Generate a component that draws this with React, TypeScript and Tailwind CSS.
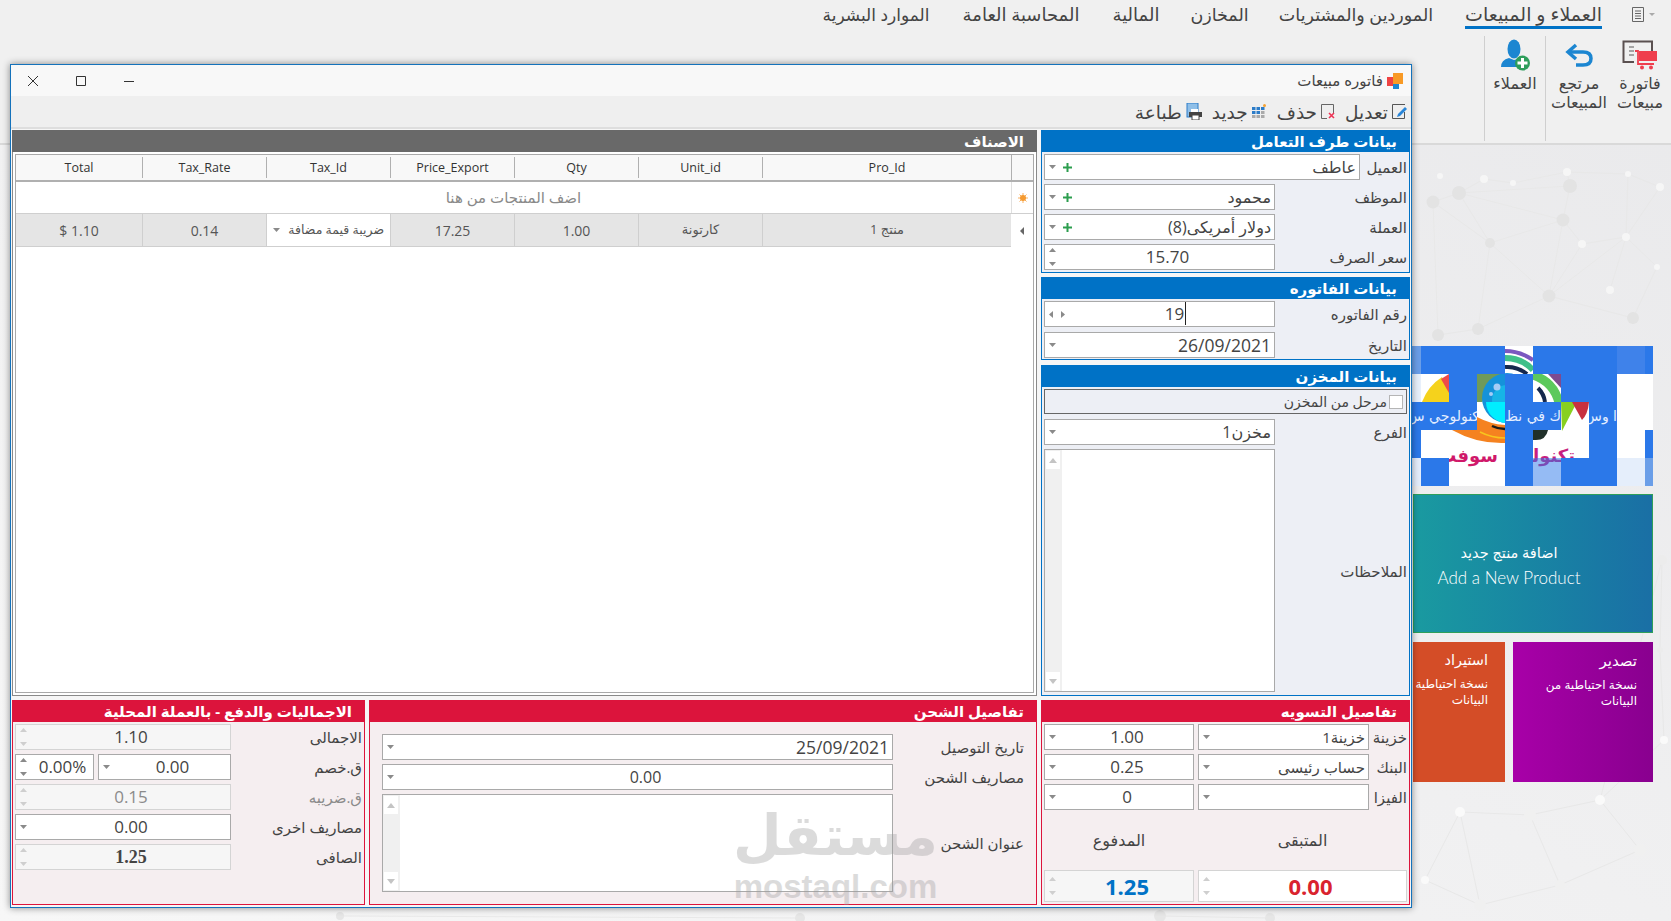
import type { ReactNode } from "react";
import clsx from "clsx";

const nodes: [number, number, number, string][] = [
  [1459, 193, 7, "#e3e3e3"], [1433, 202, 6.5, "#e3e3e3"], [1490, 243, 5, "#e3e3e3"], [1563, 220, 6.5, "#e3e3e3"],
  [1570, 186, 7, "#e3e3e3"], [1549, 296, 6.5, "#e3e3e3"], [1478, 329, 6, "#e3e3e3"], [1438, 335, 6, "#e3e3e3"],
  [1633, 318, 6, "#e3e3e3"], [1567, 172, 4, "#f6f6f6"], [1628, 174, 3, "#f6f6f6"], [1660, 187, 4, "#f6f6f6"],
  [1626, 237, 4, "#f6f6f6"], [1582, 244, 4, "#f6f6f6"], [1657, 267, 3, "#f6f6f6"], [1610, 290, 4, "#f6f6f6"],
  [1484, 179, 4, "#f6f6f6"], [1513, 183, 3, "#f6f6f6"], [1440, 176, 3, "#f6f6f6"],
  [1662, 560, 5, "#ececec"], [1664, 740, 4, "#fafafa"], [1660, 650, 3, "#ececec"], [1600, 800, 5, "#fafafa"],
  [1530, 815, 6, "#f0f0f0"], [1460, 812, 5, "#fafafa"], [1640, 850, 6, "#f0f0f0"], [1560, 885, 5, "#f0f0f0"],
  [1480, 905, 6, "#f0f0f0"], [1425, 880, 4, "#fafafa"], [1270, 918, 5, "#e6e6e6"], [800, 918, 5, "#e6e6e6"],
  [340, 916, 4, "#e6e6e6"], [1160, 916, 6, "#e6e6e6"],
];

const edges: [number, number][] = [
  [0, 1], [0, 2], [1, 2], [0, 3], [2, 3], [2, 5], [2, 6], [3, 5], [3, 13], [4, 3], [4, 9], [9, 10], [10, 11], [10, 12],
  [12, 13], [12, 5], [12, 14], [12, 15], [13, 5], [5, 6], [5, 8], [6, 7], [8, 14], [11, 12], [0, 16], [16, 17], [17, 9],
  [0, 4], [1, 7], [19, 21], [21, 20], [20, 22], [22, 23], [23, 24], [22, 25], [23, 26], [24, 27], [26, 27], [25, 26],
  [27, 28], [24, 28], [19, 22], [29, 32], [30, 31],
];

const menu = [
  { label: "العملاء و المبيعات", width: "w-[137px] text-[19px]", active: true },
  { label: "الموردين والمشتريات", width: "w-[152px] text-[17.5px]" },
  { label: "المخازن", width: "w-[55px] text-[17.5px]" },
  { label: "المالية", width: "w-[46px] text-[18px]" },
  { label: "المحاسبة العامة", width: "w-[118px] text-[18px]" },
  { label: "الموارد البشرية", width: "w-[106px] text-[17px]" },
];

const columns = ["Pro_Id", "Unit_id", "Qty", "Price_Export", "Tax_Id", "Tax_Rate", "Total"];

const Backdrop = () => (
  <svg className="absolute inset-0" width="1671" height="921" viewBox="0 0 1671 921">
    {edges.map(([a, b]) => (
      <line key={`${a}-${b}`} x1={nodes[a][0]} y1={nodes[a][1]} x2={nodes[b][0]} y2={nodes[b][1]} stroke="#e8e8e8" strokeWidth="1" />
    ))}
    {nodes.map(([x, y, r, fill]) => (
      <circle key={`${x}-${y}`} cx={x} cy={y} r={r} fill={fill} />
    ))}
  </svg>
);

const Down = () => (
  <svg width="7" height="4" viewBox="0 0 7 4"><path d="M0 0h7L3.500 4z" fill="#8a8a8a" /></svg>
);

const Spin = ({ faint }: { faint?: boolean }) => (
  <svg width="7" height="18" viewBox="0 0 7 18">
    <path d="M0 4h7L3.500 0z" fill={faint ? "#cfcfcf" : "#8a8a8a"} />
    <path d="M0 14h7L3.500 18z" fill={faint ? "#cfcfcf" : "#8a8a8a"} />
  </svg>
);

const Plus = () => (
  <svg width="9" height="9" viewBox="0 0 9 9"><path d="M3.500 0h2v3.500H9v2H5.500V9h-2V5.500H0v-2h3.500z" fill="#2c9e4f" /></svg>
);

const Field = ({
  children,
  kind = "combo",
  plus,
  right,
  off,
  className,
}: {
  children?: ReactNode;
  kind?: "combo" | "spin" | "nav";
  plus?: boolean;
  right?: boolean;
  off?: boolean;
  className?: string;
}) => (
  <div
    className={clsx(
      "flex h-[26px] shrink-0 items-center border",
      off ? "border-[#d4d4d4] bg-[#f6f6f6]" : "border-[#a9a9a9] bg-white",
      className,
    )}
  >
    <div
      className={clsx(
        "min-w-0 flex-1 whitespace-nowrap",
        right ? "pr-[3px] text-right" : "text-center",
      )}
    >
      {children}
    </div>
    <div dir="ltr" className={clsx("flex shrink-0 items-center pl-[4px]", kind === "nav" ? "w-[32px] gap-[8px]" : plus ? "w-[28px] gap-[7px]" : "w-[16px]")}>
      {kind === "combo" && <Down />}
      {kind === "spin" && <Spin faint={off} />}
      {kind === "nav" && (
        <>
          <svg width="4" height="7" viewBox="0 0 4 7"><path d="M4 0v7L0 3.500z" fill="#8a8a8a" /></svg>
          <svg width="4" height="7" viewBox="0 0 4 7"><path d="M0 0v7l4-3.500z" fill="#8a8a8a" /></svg>
        </>
      )}
      {plus && <Plus />}
    </div>
  </div>
);

const Memo = ({ className }: { className?: string }) => (
  <div dir="ltr" className={clsx("flex shrink-0 border border-[#a9a9a9] bg-white", className)}>
    <div className="flex w-[17px] flex-col justify-between bg-[#f0f0f0] p-[1px]">
      <div className="flex h-[18px] w-[14px] items-center justify-center bg-white">
        <svg width="8" height="5" viewBox="0 0 8 5"><path d="M0 5h8L4 0z" fill="#c4c4c4" /></svg>
      </div>
      <div className="flex h-[18px] w-[14px] items-center justify-center bg-white">
        <svg width="8" height="5" viewBox="0 0 8 5"><path d="M0 0h8L4 5z" fill="#c4c4c4" /></svg>
      </div>
    </div>
  </div>
);

const Panel = ({
  title,
  tone,
  className,
  children,
}: {
  title: string;
  tone: "blue" | "red" | "grey";
  className?: string;
  children: ReactNode;
}) => (
  <div
    className={clsx(
      "flex flex-col border",
      tone === "blue" && "border-[#0072c6] bg-[#edeff5]",
      tone === "red" && "border-[#dc143c] bg-[#f5eef0]",
      tone === "grey" && "border-[#8a8a8a] bg-white",
      className,
    )}
  >
    <div
      className={clsx(
        "-mx-[1px] -mt-[1px] flex h-[22px] shrink-0 items-center pr-[13px] text-[15px] font-bold text-white",
        tone === "blue" && "bg-[#0072c6]",
        tone === "red" && "bg-[#dc143c]",
        tone === "grey" && "bg-[#696969]",
      )}
    >
      {title}
    </div>
    {children}
  </div>
);

const Row = ({ label, children, muted, className }: { label: string; children: ReactNode; muted?: boolean; className?: string }) => (
  <div className={clsx("flex items-center", className)}>
    <div className={clsx("flex-1 whitespace-nowrap pt-[1px] text-[15px]", muted ? "text-[#8b8b8b]" : "text-[#444]")}>{label}</div>
    {children}
  </div>
);

const RibbonButton = ({ icon, lines, className }: { icon: ReactNode; lines: string[]; className?: string }) => (
  <div className={clsx("flex shrink-0 flex-col items-center", className)}>
    <div className="flex h-[38px] items-center justify-center">{icon}</div>
    {lines.map((line) => (
      <div key={line} className="h-[19px] whitespace-nowrap text-center text-[16px] leading-[19px] text-[#444]">{line}</div>
    ))}
  </div>
);

const ToolButton = ({ icon, label }: { icon: ReactNode; label: string }) => (
  <div className="flex items-center gap-[4px]">
    {icon}
    <span className="text-[18.5px] leading-[26px] text-[#444]">{label}</span>
  </div>
);

const Mosaic = () => (
  <svg width="241" height="140" viewBox="0 0 241 140" className="shrink-0">
    <defs>
      <clipPath id="t0"><rect x="0" y="56" width="65" height="28" /></clipPath>
      <clipPath id="t1"><rect x="93" y="56" width="56" height="28" /></clipPath>
      <clipPath id="t2"><rect x="177" y="56" width="28" height="28" /></clipPath>
      <clipPath id="p0"><rect x="37" y="100" width="56" height="40" /></clipPath>
      <clipPath id="p1"><rect x="121" y="100" width="56" height="40" /></clipPath>
    </defs>
    <rect width="241" height="140" fill="#fff" />
    {/* logo pieces */}
    <path d="M10 56Q16 40 30 31L37 46V56z" fill="#f5d21c" />
    <path d="M29 33L37 28V47z" fill="#ee4a4a" />
    <rect x="65" y="28" width="28" height="28" fill="#9fc8ef" />
    <path d="M65 28H93L70 56H65z" fill="#6f9a5a" />
    <circle cx="95" cy="52" r="25" fill="#1592da" />
    <circle cx="95" cy="54" r="15" fill="#17b4e6" />
    <circle cx="85" cy="41" r="3.500" fill="#a5cdf6" />
    <circle cx="79" cy="48" r="2" fill="#a5cdf6" />
    <path d="M74 56A21 21 0 0 0 95 77V56z" fill="#00eeff" />
    <path d="M65 71Q78 78 93 79V84H65z" fill="#f58220" />
    <path d="M40 84Q65 98 93 97V84z" fill="#f58220" />
    <path d="M68 86Q80 92 93 92" fill="none" stroke="#f7c51e" strokeWidth="1.500" />
    <path d="M80 80Q86 83 93 83" fill="none" stroke="#1b1b1b" strokeWidth="2.500" />
    <path d="M93 5Q108 5 121 14" fill="none" stroke="#7b57c0" strokeWidth="4" />
    <path d="M93 12Q110 12 121 24" fill="none" stroke="#3fc08a" strokeWidth="6" />
    <path d="M93 21Q105 20 115 28" fill="none" stroke="#15284d" strokeWidth="4" />
    <path d="M121 29Q142 36 147 57" fill="none" stroke="#5cc95c" strokeWidth="9" />
    <path d="M136 28H149V42z" fill="#7d4b8f" />
    <path d="M126 42Q132 48 133 56" fill="none" stroke="#15284d" strokeWidth="4" />
    <path d="M149 56H165L150 85z" fill="#88d020" />
    <path d="M160 56H177Q176 68 170 74z" fill="#c8303f" />
    <path d="M121 84H136Q134 94 124 94H121z" fill="#20302a" />
    {/* pink name */}
    <text x="86" y="116" direction="rtl" fontSize="18" fontWeight="700" fill="#d0186a" fontFamily="DejaVu Sans" clipPath="url(#p0)">سوفت</text>
    <text x="163" y="116" direction="rtl" fontSize="18" fontWeight="700" fill="#c81e80" fontFamily="DejaVu Sans" clipPath="url(#p1)">تكنولوجي</text>
    {/* blocks that failed to load */}
    <g fill="#2b78e9">
      <rect x="9" y="0" width="84" height="28" />
      <rect x="121" y="0" width="84" height="28" />
      <rect x="205" y="0" width="28" height="28" fill="#3f82ea" />
      <rect x="233" y="0" width="8" height="28" />
      <rect x="37" y="28" width="28" height="28" />
      <rect x="93" y="28" width="28" height="28" />
      <rect x="149" y="28" width="56" height="28" />
      <rect x="0" y="56" width="65" height="28" />
      <rect x="93" y="56" width="56" height="28" />
      <rect x="177" y="56" width="28" height="28" />
      <rect x="0" y="84" width="9" height="28" />
      <rect x="93" y="84" width="28" height="56" />
      <rect x="177" y="84" width="28" height="28" />
      <rect x="233" y="84" width="8" height="28" />
      <rect x="9" y="112" width="28" height="28" />
      <rect x="149" y="112" width="56" height="28" />
    </g>
    <rect x="0" y="0" width="9" height="28" fill="#6a9ee8" />
    <rect x="0" y="28" width="9" height="28" fill="#e8f0fb" />
    <rect x="0" y="112" width="9" height="28" fill="#e4edfb" />
    <rect x="121" y="112" width="28" height="28" fill="#2b78e9" opacity="0.5" />
    <rect x="205" y="112" width="28" height="28" fill="#e5eefb" />
    <rect x="233" y="112" width="8" height="28" fill="#6a9ee8" />
    <g fill="#e4eeff" fontSize="14" fontFamily="DejaVu Sans">
      <text x="72" y="75" direction="rtl" clipPath="url(#t0)">تكنولوجي س</text>
      <text x="149" y="75" direction="rtl" clipPath="url(#t1)">ك في نظ</text>
      <text x="205" y="75" direction="rtl" clipPath="url(#t2)">ا وس</text>
    </g>
  </svg>
);

const App = () => (
  <div
    dir="rtl"
    className="relative flex h-[921px] w-[1671px] flex-col overflow-hidden bg-linear-to-bl from-[#e9e9eb] to-[#f7f7f7] font-['Open_Sans','DejaVu_Sans',sans-serif] text-[#444]"
  >
    <Backdrop />

    {/* ribbon */}
    <div className="relative h-[145px] shrink-0 border-b-2 border-[#d9d9d9] bg-[#f0f0f0]">
      <div className="flex h-[36px] items-start pr-[16px]">
        <div dir="ltr" className="mt-[7px] ml-[30px] flex items-center gap-[2px]">
          <svg width="15" height="15" viewBox="0 0 15 15" fill="none" stroke="#666">
            <path d="M.5.5h11v14H.5zM3 4h6M3 6.5h6M3 9h6M3 11.5h6" />
          </svg>
          <svg width="6" height="3" viewBox="0 0 6 3"><path d="M0 0h6L3 3z" fill="#aaa" /></svg>
        </div>
        <div className="flex gap-[33px]">
          {menu.map((item) => (
            <div
              key={item.label}
              className={clsx(
                "flex h-[29px] items-start justify-center whitespace-nowrap pt-[1px] leading-[27px]",
                item.width,
                item.active && "border-b-[3px] border-[#0072c6]",
              )}
            >
              {item.label}
            </div>
          ))}
        </div>
      </div>
      <div className="flex pr-[3px]">
        <RibbonButton
          className="w-[56px]"
          lines={["فاتورة", "مبيعات"]}
          icon={
            <svg width="36" height="30" viewBox="0 0 36 30" fill="none">
              <path d="M12 22H1.500V1.500H30V11" stroke="#5a5050" strokeWidth="2" />
              <path d="M7 7h5M7 11h5M7 15h5" stroke="#8a8a8a" strokeWidth="1.600" />
              <path d="M13 11h3v13h16" stroke="#ef3e4d" strokeWidth="1.800" />
              <rect x="17" y="11" width="18" height="10" fill="#ef3e4d" />
              <circle cx="20" cy="27.500" r="2" fill="#ef3e4d" />
              <circle cx="29" cy="27.500" r="2" fill="#ef3e4d" />
            </svg>
          }
        />
        <RibbonButton
          className="w-[66px]"
          lines={["مرتجع", "المبيعات"]}
          icon={
            <svg width="28" height="24" viewBox="0 0 28 24" fill="none" stroke="#1c86d1" strokeWidth="3.500">
              <path d="M11 2L3 9l8 7" />
              <path d="M3 9h15q8 0 8 6.500T18 22h-7" />
            </svg>
          }
        />
        <div className="h-[105px] w-[1px] bg-[#cfcfcf]" />
        <RibbonButton
          className="w-[60px]"
          lines={["العملاء"]}
          icon={
            <svg width="29" height="32" viewBox="0 0 29 32">
              <ellipse cx="13" cy="10" rx="6.500" ry="9.500" fill="#1c86d1" />
              <path d="M0 28q0-7 8-9l5 2 4-1v8z" fill="#1c86d1" />
              <circle cx="21.500" cy="24" r="7.500" fill="#2e9e5b" />
              <path d="M20 19h3v3.500h3.500v3H23V29h-3v-3.500h-3.500v-3H20z" fill="#fff" />
            </svg>
          }
        />
        <div className="h-[105px] w-[1px] bg-[#cfcfcf]" />
      </div>
    </div>

    {/* tiles beside the window */}
    <div className="relative flex flex-col pt-[201px] pr-[18px]">
      <Mosaic />
      <div className="mt-[8px] ml-[1px] h-[139px] w-[240px] border border-[#2e9f5a] bg-linear-to-r from-[#1a9aa0] to-[#1a6fa5] pt-[47px] pr-[48px] text-center text-white">
        <div className="text-[14.5px]">اضافة منتج جديد</div>
        <div dir="ltr" className="mt-[1px] whitespace-nowrap font-['Lato',sans-serif] text-[17px] font-light">Add a New Product</div>
      </div>
      <div className="mt-[9px] flex gap-[8px]">
        <div className="h-[140px] w-[140px] bg-linear-to-r from-[#a800a8] to-[#89008f] pt-[7px] pr-[16px] text-white">
          <div className="text-[15px]">تصدير</div>
          <div className="mt-[5px] text-[12px] leading-[16px]">نسخة احتياطية من<br />البيانات</div>
        </div>
        <div className="h-[140px] w-[92px] bg-[#d44d27] pt-[7px] pr-[17px] text-white">
          <div className="text-[14.5px]">استيراد</div>
          <div className="mt-[5px] text-[12px] leading-[16px] whitespace-nowrap">نسخة احتياطية<br />البيانات</div>
        </div>
      </div>
    </div>

    {/* invoice window */}
    <div className="absolute top-[64px] left-[10px] flex h-[844px] w-[1402px] flex-col border border-[#1472bb] bg-[#f6f6f6] shadow-[0_0_7px_rgba(0,0,0,0.45)]">
      <div className="flex h-[31px] shrink-0 items-center justify-between bg-[#f8f8f8] pr-[8px]">
        <div className="flex items-center gap-[4px] text-[15px]">
          <svg width="16" height="16" viewBox="0 0 16 16">
            <rect x="6" width="10" height="11" fill="#f89a26" />
            <rect y="4" width="6" height="9" fill="#ee4444" />
            <rect x="6" y="11" width="6" height="5" fill="#1c86d1" />
          </svg>
          فاتوره مبيعات
        </div>
        <div dir="ltr" className="flex items-center gap-[38px] pl-[17px]">
          <svg width="10" height="10" viewBox="0 0 10 10" stroke="#333" fill="none"><path d="M0 0l10 10M10 0L0 10" /></svg>
          <svg width="10" height="10" viewBox="0 0 10 10" stroke="#333" fill="none"><path d="M.5.5h9v9h-9z" /></svg>
          <svg width="10" height="10" viewBox="0 0 10 10" stroke="#333" fill="none"><path d="M0 5.500h10" /></svg>
        </div>
      </div>
      <div className="flex h-[33px] shrink-0 items-center gap-[10px] border-b-2 border-[#dedede] bg-[#efefef] pr-[4px]">
        <ToolButton
          label="تعديل"
          icon={
            <svg width="15" height="15" viewBox="0 0 15 15" fill="none">
              <path d="M13 .5H.5v14h12V8" stroke="#555" />
              <path d="M6 10l7-7 2 2-7 7-3 1z" fill="#2a86d8" />
            </svg>
          }
        />
        <ToolButton
          label="حذف"
          icon={
            <svg width="14" height="15" viewBox="0 0 14 15" fill="none">
              <path d="M6 14.500H.5V.5h12V9" stroke="#666" />
              <path d="M8 9l5 5M13 9l-5 5" stroke="#ee3355" strokeWidth="1.600" />
            </svg>
          }
        />
        <ToolButton
          label="جديد"
          icon={
            <svg width="15" height="15" viewBox="0 0 15 15">
              <rect y="3" width="3.500" height="3" fill="#2c7cc8" /><rect x="4.500" y="3" width="3.500" height="3" fill="#2c7cc8" /><rect x="9" y="3" width="3.500" height="3" fill="#2c7cc8" />
              <rect y="7" width="3.500" height="3" fill="#2c7cc8" /><rect x="4.500" y="7" width="3.500" height="3" fill="#2c7cc8" /><rect x="9" y="7" width="3.500" height="3" fill="#aaa" />
              <rect y="11" width="3.500" height="3" fill="#aaa" /><rect x="4.500" y="11" width="3.500" height="3" fill="#aaa" /><rect x="9" y="11" width="3.500" height="3" fill="#aaa" />
              <circle cx="12.500" cy="1.500" r="1.500" fill="#f5a030" />
            </svg>
          }
        />
        <ToolButton
          label="طباعة"
          icon={
            <svg width="16" height="17" viewBox="0 0 16 17">
              <rect x="1" y="0" width="11" height="14" fill="#8fbfe8" stroke="#2c7cc8" />
              <rect x="5" y="6" width="7" height="4" fill="#fff" />
              <rect x="3" y="9" width="13" height="5" fill="#444" />
              <rect x="6" y="12" width="7" height="5" fill="#fff" stroke="#444" />
            </svg>
          }
        />
      </div>

      <div className="flex min-h-0 flex-1 flex-col gap-[4px] px-[1px] pt-[1px] pb-[2px]">
        <div className="flex h-[566px] shrink-0 gap-[4px]">
          <div className="flex w-[369px] shrink-0 flex-col">
            <Panel title="بيانات طرف التعامل" tone="blue" className="h-[143px] shrink-0">
              <div className="flex flex-col gap-[4px] px-[2px] pt-[2px]">
                <Row label="العميل"><Field plus right className="w-[316px] text-[16px]">عاطف</Field></Row>
                <Row label="الموظف"><Field plus right className="w-[231px] text-[16px]">محمود</Field></Row>
                <Row label="العملة"><Field plus right className="w-[231px] text-[16px]">دولار أمريكى(8)</Field></Row>
                <Row label="سعر الصرف"><Field kind="spin" className="w-[231px] text-[17px]">15.70</Field></Row>
              </div>
            </Panel>
            <Panel title="بيانات الفاتوره" tone="blue" className="mt-[4px] h-[83px] shrink-0">
              <div className="flex flex-col gap-[5px] px-[2px] pt-[2px]">
                <Row label="رقم الفاتوره">
                  <Field kind="nav" className="w-[231px] text-[17px]">
                    <span className="border-r border-[#222] pr-[1px]">19</span>
                  </Field>
                </Row>
                <Row label="التاريخ"><Field right className="w-[231px] text-[17.5px]">26/09/2021</Field></Row>
              </div>
            </Panel>
            <Panel title="بيانات المخزن" tone="blue" className="mt-[5px] h-[331px] shrink-0">
              <div className="flex min-h-0 flex-1 flex-col px-[2px] pt-[2px]">
                <div className="flex h-[25px] shrink-0 items-center gap-[2px] border border-[#666] pr-[3px] text-[14px]">
                  <div className="h-[14px] w-[14px] border border-[#b5b5b5] bg-white" />
                  مرحل من المخزن
                </div>
                <Row label="الفرع" className="mt-[5px]"><Field right className="w-[231px] text-[16px]">مخزن1</Field></Row>
                <Row label="الملاحظات" className="mt-[4px]"><Memo className="h-[243px] w-[231px]" /></Row>
              </div>
            </Panel>
          </div>

          <Panel title="الاصناف" tone="grey" className="min-w-0 flex-1">
            <div className="mx-[2px] mt-[2px] mb-[2px] flex-1 border border-[#a9a9a9] bg-white">
              <div className="grid h-[27px] grid-cols-[22px_249px_124px_124px_124px_124px_124px_1fr] border-b-2 border-[#b0b0b0] bg-[#f8f8f8] text-[12.5px] text-[#333]">
                <div className="border-l border-[#b0b0b0]" />
                {columns.map((name, i) => (
                  <div key={name} className="flex items-center justify-center">
                    <span className="flex-1 pt-[2px] text-center">{name}</span>
                    {i < columns.length - 1 && <span className="h-[21px] w-[1px] bg-[#b0b0b0]" />}
                  </div>
                ))}
              </div>
              <div className="grid h-[32px] grid-cols-[22px_1fr] border-b border-[#cfcfcf]">
                <div className="flex items-center justify-center border-l border-[#e0e0e0]">
                  <svg width="10" height="10" viewBox="0 0 10 10">
                    <path d="M5 0v10M0 5h10M1.500 1.500l7 7M8.500 1.500l-7 7" stroke="#f9b060" strokeWidth="1" />
                    <circle cx="5" cy="5" r="3" fill="#f59a30" />
                  </svg>
                </div>
                <div className="flex items-center justify-center text-[15px] text-[#8a8a8a]">اضف المنتجات من هنا</div>
              </div>
              <div className="grid h-[33px] grid-cols-[22px_249px_124px_124px_124px_124px_124px_1fr] text-[14px] text-[#555]">
                <div className="flex items-center justify-center bg-white">
                  <svg width="4" height="8" viewBox="0 0 4 8"><path d="M4 0v8L0 4z" fill="#666" /></svg>
                </div>
                <div className="flex items-center justify-center border-b border-l border-[#cfcfcf] bg-[#e5e5e5] text-[13px]">منتج 1</div>
                <div className="flex items-center justify-center border-b border-l border-[#cfcfcf] bg-[#e5e5e5] text-[13px]">كارتونة</div>
                <div className="flex items-center justify-center border-b border-l border-[#cfcfcf] bg-[#e5e5e5]">1.00</div>
                <div className="flex items-center justify-center border-b border-l border-[#cfcfcf] bg-[#e5e5e5]">17.25</div>
                <div className="flex items-center justify-between border-b border-l border-[#cfcfcf] bg-white pr-[6px] pl-[6px] text-[12.5px]">
                  ضريبة قيمة مضافة
                  <Down />
                </div>
                <div className="flex items-center justify-center border-b border-l border-[#cfcfcf] bg-[#e5e5e5]">0.14</div>
                <div dir="ltr" className="flex items-center justify-center border-b border-[#cfcfcf] bg-[#e5e5e5]">$ 1.10</div>
              </div>
            </div>
          </Panel>
        </div>

        <div className="flex h-[205px] shrink-0 gap-[4px]">
          <Panel title="تفاصيل التسويه" tone="red" className="w-[369px] shrink-0">
            <div className="flex flex-col gap-[4px] px-[2px] pt-[2px]">
              {[
                ["خزينة", "خزينة1", "1.00"],
                ["البنك", "حساب رئيسى", "0.25"],
                ["الفيزا", "", "0"],
              ].map(([label, account, amount]) => (
                <Row key={label} label={label}>
                  <div className="flex gap-[4px]">
                    <Field right className="w-[171px] text-[15px]">{account}</Field>
                    <Field className="w-[150px] text-[17px]">{amount}</Field>
                  </div>
                </Row>
              ))}
              <div className="mt-[14px] flex h-[22px] gap-[4px] text-center text-[16px]">
                <div className="w-[209px]">المتبقى</div>
                <div className="w-[150px]">المدفوع</div>
              </div>
              <div className="mt-[16px] flex gap-[4px]">
                <Field off kind="spin" className="h-[32px] w-[209px] bg-white text-[22px] leading-[28px] font-bold text-[#d9232e]">0.00</Field>
                <Field off kind="spin" className="h-[32px] w-[150px] text-[22px] leading-[28px] font-bold text-[#0072c6]">1.25</Field>
              </div>
            </div>
          </Panel>

          <Panel title="تفاصيل الشحن" tone="red" className="w-[668px] shrink-0">
            <div className="flex flex-col gap-[4px] px-[12px] pt-[12px]">
              <Row label="تاريخ التوصيل"><Field right className="w-[511px] text-[17.5px]">25/09/2021</Field></Row>
              <Row label="مصاريف الشحن"><Field className="w-[511px] text-[16px]">0.00</Field></Row>
              <Row label="عنوان الشحن"><Memo className="h-[98px] w-[511px]" /></Row>
            </div>
          </Panel>

          <Panel title="الاجماليات والدفع - بالعملة المحلية" tone="red" className="min-w-0 flex-1">
            <div className="flex flex-col gap-[4px] px-[2px] pt-[2px]">
              <Row label="الاجمالى"><Field off kind="spin" className="w-[216px] text-[17px]">1.10</Field></Row>
              <Row label="ق.خصم">
                <div className="flex gap-[4px] text-[17px]">
                  <Field className="w-[133px]">0.00</Field>
                  <Field kind="spin" className="w-[79px]">0.00%</Field>
                </div>
              </Row>
              <Row label="ق.ضريبه" muted><Field off kind="spin" className="w-[216px] text-[17px] text-[#8b8b8b]">0.15</Field></Row>
              <Row label="مصاريف اخرى"><Field className="w-[216px] text-[17px]">0.00</Field></Row>
              <Row label="الصافى"><Field off kind="spin" className="w-[216px] font-['Liberation_Serif',serif] text-[18px] font-bold">1.25</Field></Row>
            </div>
          </Panel>
        </div>
      </div>
    </div>

    {/* site watermark */}
    <div dir="ltr" className="pointer-events-none absolute top-[794px] left-[733px] w-[205px] text-center text-[#9b9b9b] opacity-35">
      <div dir="rtl" className="h-[78px] text-[56px] leading-[78px] font-bold">مستقل</div>
      <div className="font-['Liberation_Sans',sans-serif] text-[33px] leading-[30px] font-bold">mostaql.com</div>
    </div>
  </div>
);

export default App;
